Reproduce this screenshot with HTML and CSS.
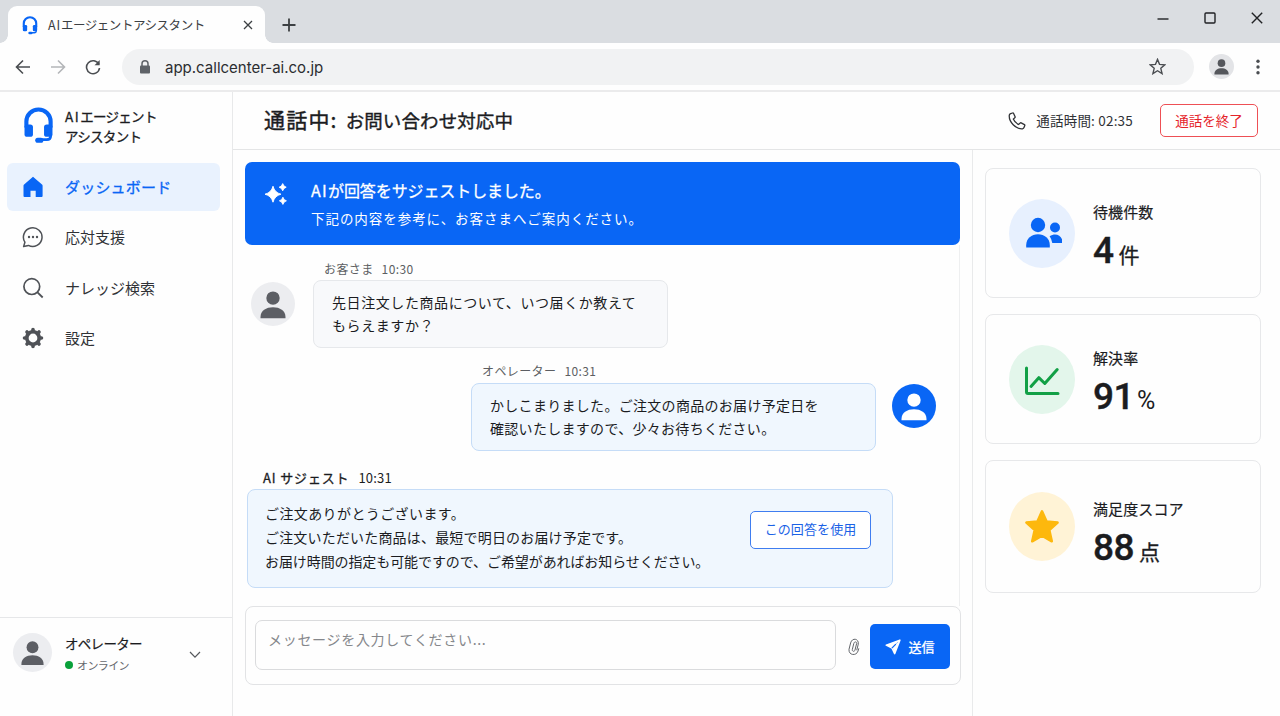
FILE: index.html
```html
<!DOCTYPE html>
<html lang="ja">
<head>
  <meta charset="UTF-8">
  <meta name="viewport" content="width=device-width, initial-scale=1">
  <title>AIエージェントアシスタント</title>
  <link rel="stylesheet" href="styles.css">
</head>
<body>
  <!-- shared icons -->
  <svg class="defs" width="0" height="0">
    <symbol id="headset" viewBox="0 0 28 36">
      <path d="M2.2 20v-5.800a11.800 11.800 0 0 1 23.600 0V20" fill="none" stroke="currentColor" stroke-width="4"/>
      <rect x="0.400" y="17" width="8.200" height="12" rx="2.600" fill="currentColor"/>
      <rect x="19.400" y="17" width="8.200" height="12" rx="2.600" fill="currentColor"/>
      <path d="M25.800 26v2.500q0 3.300-3.600 3.300H16" fill="none" stroke="currentColor" stroke-width="2.600"/>
      <rect x="10.800" y="29.800" width="8" height="5" rx="2.500" fill="currentColor"/>
    </symbol>
    <symbol id="person" viewBox="0 0 44 44">
      <circle cx="22" cy="16.100" r="6.700" fill="currentColor"/>
      <path d="M9.500 36.200v-1.200C9.500 28.500 15.200 25.200 22 25.200S34.500 28.500 34.500 35v1.200z" fill="currentColor"/>
    </symbol>
  </svg>

  <div class="tabstrip">
    <div class="tab">
      <svg class="tab-icon"><use href="#headset"/></svg>
      <span class="tab-title"><span class="latin">AI</span>エージェントアシスタント</span>
      <svg class="tab-close" viewBox="0 0 10 10"><path d="M1 1l8 8M9 1l-8 8"/></svg>
    </div>
    <svg class="tab-new" viewBox="0 0 14 14"><path d="M7 .5v13M.5 7h13"/></svg>
    <div class="window-buttons">
      <svg viewBox="0 0 12 12"><path d="M.5 7h11"/></svg>
      <svg viewBox="0 0 12 12"><rect x="1" y="1" width="10" height="10" rx="1"/></svg>
      <svg viewBox="0 0 12 12"><path d="M.8.8l10.400 10.400M11.200.8L.8 11.200"/></svg>
    </div>
  </div>

  <div class="toolbar">
    <svg class="tool back" viewBox="0 0 16 16"><path d="M15 8H1.500M8 1.500L1.500 8 8 14.500"/></svg>
    <svg class="tool forward" viewBox="0 0 16 16"><path d="M1 8h13.500M8 1.500L14.500 8 8 14.500"/></svg>
    <svg class="tool reload" viewBox="0 0 16 16"><path d="M13.800 5.200A6.500 6.500 0 1 0 14.500 9"/><path d="M14.700 1v5.200H9.500z" class="solid"/></svg>
    <div class="address">
      <svg class="lock" viewBox="0 0 12 14"><path d="M3 6V3.800a3 3 0 0 1 6 0V6" fill="none" stroke="#5f6368" stroke-width="1.500"/><rect x="1" y="5.500" width="10" height="8" rx="1" fill="#5f6368"/></svg>
      <span class="url">app.callcenter-ai.co.jp</span>
      <svg class="bookmark" viewBox="0 0 16 16"><path d="M8 1.300l1.900 4.700 5 .4-3.800 3.300 1.200 5L8 12l-4.300 2.700 1.200-5L1.100 6.400l5-.4z"/></svg>
    </div>
    <div class="profile"><svg><use href="#person"/></svg></div>
    <svg class="more" viewBox="0 0 4 16"><circle cx="2" cy="2.200" r="1.700"/><circle cx="2" cy="8" r="1.700"/><circle cx="2" cy="13.800" r="1.700"/></svg>
  </div>

  <div class="app">
    <div class="sidebar">
      <div class="brand">
        <svg class="brand-icon"><use href="#headset"/></svg>
        <div class="brand-name"><span class="latin">AI</span>エージェント<br>アシスタント</div>
      </div>
      <div class="nav">
        <div class="nav-item active">
          <svg viewBox="0 0 22 22"><path d="M11 .8L20 8.500q.6.500.6 1.300V20q0 1-1 1h-5.900v-6.300H8.500V21H2.500q-1 0-1-1V9.800q0-.8.6-1.300z" fill="currentColor"/></svg>
          <span>ダッシュボード</span>
        </div>
        <div class="nav-item">
          <svg viewBox="0 0 22 22"><path d="M2.900 16.200A9.300 9.300 0 1 1 6.400 19.400L1.600 20.600z" fill="none" stroke="currentColor" stroke-width="1.500" stroke-linejoin="round"/><circle cx="7" cy="11" r="1.200" fill="currentColor"/><circle cx="11" cy="11" r="1.200" fill="currentColor"/><circle cx="15" cy="11" r="1.200" fill="currentColor"/></svg>
          <span>応対支援</span>
        </div>
        <div class="nav-item">
          <svg viewBox="0 0 22 22"><circle cx="9.800" cy="9.600" r="7.900" fill="none" stroke="currentColor" stroke-width="1.700"/><path d="M15.500 15.300l5.200 5.200" stroke="currentColor" stroke-width="1.800"/></svg>
          <span>ナレッジ検索</span>
        </div>
        <div class="nav-item">
          <svg viewBox="0 0 22 22">
            <circle cx="11" cy="11" r="6.200" fill="none" stroke="currentColor" stroke-width="3.600"/>
            <g stroke="currentColor" stroke-width="3.600" stroke-linecap="round"><path d="M11 2.500v2M11 17.500v2M2.500 11h2M17.500 11h2M5 5l1.400 1.400M15.600 15.600L17 17M5 17l1.400-1.400M15.600 6.400L17 5"/></g>
          </svg>
          <span>設定</span>
        </div>
      </div>
      <div class="user">
        <div class="avatar user-avatar"><svg><use href="#person"/></svg></div>
        <div class="user-text">
          <div class="user-name">オペレーター</div>
          <div class="user-status"><i></i>オンライン</div>
        </div>
        <svg class="chevron" viewBox="0 0 12 8"><path d="M1 1l5 5.200L11 1"/></svg>
      </div>
    </div>

    <div class="main">
      <div class="header">
        <h1>通話中:<span>お問い合わせ対応中</span></h1>
        <svg class="phone" viewBox="0 0 18 18"><path d="M2.600 1.600L4.600 1q.7-.2 1 .5l1.500 3.300q.2.600-.3 1L5.300 7.100q1.300 3.300 5.200 5.400l1.700-1.500q.4-.4 1-.1l3.200 1.700q.6.400.4 1l-.8 2q-.4 1-1.500 1.200C8 17.400.6 10 1.300 3.200q.2-1.200 1.300-1.600z"/></svg>
        <span class="call-time">通話時間: 02:35</span>
        <button class="end-call">通話を終了</button>
      </div>

      <div class="content">
        <div class="chat">
          <div class="banner">
            <svg viewBox="0 0 24 24"><path d="M9 4.200q1.600 6.400 8 8-6.400 1.600-8 8-1.600-6.400-8-8 6.400-1.600 8-8zM18.700 1.600q.8 3 3.500 3.600-2.700.7-3.500 3.600-.8-2.900-3.500-3.600 2.700-.6 3.500-3.600zM18.900 15.200q.8 3 3.500 3.600-2.700.7-3.500 3.600-.8-2.900-3.500-3.600 2.700-.6 3.500-3.600z" fill="#fff" stroke="#fff" stroke-width=".9" stroke-linejoin="round"/></svg>
            <div>
              <div class="banner-title"><span class="latin">AI</span>が回答をサジェストしました。</div>
              <div class="banner-text">下記の内容を参考に、お客さまへご案内ください。</div>
            </div>
          </div>

          <div class="messages">
            <div class="message customer">
              <div class="avatar"><svg><use href="#person"/></svg></div>
              <div class="message-body">
                <div class="meta">お客さま<time>10:30</time></div>
                <div class="bubble">先日注文した商品について、いつ届くか教えて<br>もらえますか？</div>
              </div>
            </div>
            <div class="message operator">
              <div class="message-body">
                <div class="meta">オペレーター<time>10:31</time></div>
                <div class="bubble">かしこまりました。ご注文の商品のお届け予定日を<br>確認いたしますので、少々お待ちください。</div>
              </div>
              <div class="avatar"><svg><use href="#person"/></svg></div>
            </div>
            <div class="suggest">
              <div class="suggest-meta"><b>AI サジェスト</b><time>10:31</time></div>
              <div class="suggest-box">
                <div class="suggest-text">
                  <p class="wide">ご注文ありがとうございます。</p>
                  <p class="mid">ご注文いただいた商品は、最短で明日のお届け予定です。</p>
                  <p>お届け時間の指定も可能ですので、ご希望があればお知らせください。</p>
                </div>
                <button class="use-answer">この回答を使用</button>
              </div>
            </div>
          </div>

          <div class="composer">
            <div class="input">メッセージを入力してください...</div>
            <svg class="clip" viewBox="0 0 14 20"><path d="M10.400 6.500L8.600 13.500C8 15.600 5.200 15 5.700 12.700L7.300 6.200C8 3.300 11.300 4 10.500 7M12.900 11.500L12 14.500C10.300 20.300 1.300 19.400 2 12.600L3.800 5.500C5.500-.9 13.200.6 12.300 6.800L10.600 13.600"/></svg>
            <button class="send">
              <svg viewBox="0 0 18 18"><path d="M16.700 1.300L10.900 16.400 8 10.200 1.400 6.900z" fill="none" stroke="#fff" stroke-width="1.800" stroke-linejoin="round"/><path d="M16.500 1.500L8.500 9.800l2.500 6zM16 1.500L1.500 7 8 10z" fill="#fff"/><path d="M7.700 10.300L12.200 5.800" stroke="#0966f5" stroke-width="1.200"/></svg>
              送信
            </button>
          </div>
        </div>

        <div class="stats">
          <div class="card waiting">
            <div class="card-icon">
              <svg viewBox="0 0 40 40"><g fill="#0966f5"><circle cx="16" cy="12" r="7.200"/><path d="M4.200 34.500v-2.300C4.200 25.500 9.500 21.300 16 21.300s11.800 4.200 11.800 10.900v2.300z"/><circle cx="33" cy="14.500" r="5"/><path d="M27.600 23.300c7-4.300 13.200.3 13.200 6.700H30.300q-.6-3.800-2.700-6.700z"/></g></svg>
            </div>
            <div class="card-text">
              <div class="label">待機件数</div>
              <div class="value">4<span>件</span></div>
            </div>
          </div>
          <div class="card solved">
            <div class="card-icon">
              <svg viewBox="0 0 40 40"><path d="M4.500 9v24q0 1.500 1.500 1.500H36M9 27.500l7.800-8.800 6 5.800L35.200 10.500" fill="none" stroke="#12a046" stroke-width="3" stroke-linecap="round" stroke-linejoin="round"/></svg>
            </div>
            <div class="card-text">
              <div class="label">解決率</div>
              <div class="value">91<span class="percent">%</span></div>
            </div>
          </div>
          <div class="card score">
            <div class="card-icon">
              <svg viewBox="0 0 40 40"><path d="M20 4.300l4.600 10.200 11 1.100-8.300 7.500 2.500 11.200L20 28.700l-9.800 5.600 2.500-11.200-8.300-7.500 11-1.100z" fill="#fdb80d" stroke="#fdb80d" stroke-width="2.500" stroke-linejoin="round"/></svg>
            </div>
            <div class="card-text">
              <div class="label">満足度スコア</div>
              <div class="value">88<span>点</span></div>
            </div>
          </div>
        </div>
      </div>
    </div>
  </div>
</body>
</html>
```
FILE: styles.css
```css
* {
  box-sizing: border-box;
}
body {
  margin: 0;
  height: 716px;
  overflow: hidden;
  display: flex;
  flex-direction: column;
  background: #fefefe;
  color: #1b1c1f;
  font-family: "Noto Sans CJK JP", sans-serif;
  font-size: 14px;
}
svg {
  display: block;
  flex: none;
}
h1, p {
  margin: 0;
}
button {
  font-family: inherit;
  padding: 0;
  white-space: nowrap;
}
.defs {
  position: absolute;
}
.latin {
  letter-spacing: 1.300px;
}

/* browser window */
.tabstrip {
  height: 43px;
  flex: none;
  display: flex;
  align-items: center;
  background: #dadde1;
}
.tab {
  position: relative;
  align-self: flex-end;
  width: 257px;
  height: 37px;
  margin-left: 8px;
  padding: 0 12px 0 14px;
  display: flex;
  align-items: center;
  background: #fefefe;
  border-radius: 9px 9px 0 0;
}
.tab::before, .tab::after {
  content: "";
  position: absolute;
  bottom: 0;
  width: 8px;
  height: 8px;
}
.tab::before {
  left: -8px;
  background: radial-gradient(circle at 0 0, #dadde1 7.500px, #fefefe 8px);
}
.tab::after {
  right: -8px;
  background: radial-gradient(circle at 100% 0, #dadde1 7.500px, #fefefe 8px);
}
.tab-icon {
  width: 16px;
  height: 19px;
  margin-top: 2px;
  color: #0966f5;
}
.tab-title {
  flex: 1;
  margin-left: 10px;
  font-size: 12.500px;
  letter-spacing: -0.450px;
  color: #3c4043;
  white-space: nowrap;
}
.tab-title .latin {
  letter-spacing: 0.800px;
}
.tab-close {
  width: 10px;
  height: 10px;
}
.tab-close path, .tab-new path {
  stroke: #3c4043;
  stroke-width: 1.300;
}
.tab-new {
  width: 14px;
  height: 14px;
  margin: 6px 0 0 17px;
}
.tab-new path {
  stroke-width: 1.800;
}
.window-buttons {
  margin-left: auto;
  padding: 0 17px 7px 0;
  display: flex;
  gap: 35px;
}
.window-buttons svg {
  width: 12px;
  height: 12px;
  fill: none;
  stroke: #202124;
  stroke-width: 1.400;
}
.toolbar {
  height: 49px;
  flex: none;
  padding: 0 20px 0 15px;
  display: flex;
  align-items: center;
  border-bottom: 2px solid #ebebec;
}
.tool {
  width: 16px;
  height: 16px;
  margin-right: 19px;
  fill: none;
  stroke: #4a4d51;
  stroke-width: 1.600;
}
.forward {
  stroke: #b4b6b9;
}
.reload .solid {
  fill: #4a4d51;
  stroke: none;
}
.reload {
  margin-right: 21px;
}
.address {
  width: 1072px;
  height: 36px;
  padding: 0 28px 0 17px;
  display: flex;
  align-items: center;
  background: #f1f2f3;
  border-radius: 18px;
}
.lock {
  width: 12px;
  height: 14px;
}
.url {
  flex: 1;
  margin-left: 14px;
  padding-top: 2px;
  font-family: Inter, sans-serif;
  font-size: 15px;
  color: #2b2d30;
}
.bookmark {
  width: 17px;
  height: 17px;
  fill: none;
  stroke: #4a4d51;
  stroke-width: 1.300;
}
.profile {
  width: 25px;
  height: 25px;
  margin-left: 15px;
  border-radius: 50%;
  background: #e3e4e7;
  color: #55575c;
}
.profile svg {
  width: 25px;
  height: 25px;
}
.more {
  width: 4px;
  height: 16px;
  margin-left: auto;
  fill: #4a4d51;
}

/* sidebar */
.app {
  flex: 1;
  min-height: 0;
  display: flex;
}
.sidebar {
  width: 233px;
  flex: none;
  display: flex;
  flex-direction: column;
  border-right: 1px solid #e8e9ea;
}
.brand {
  display: flex;
  align-items: center;
  padding: 14px 0 0 24px;
}
.brand-icon {
  width: 29px;
  height: 37px;
  margin-top: -2px;
  color: #0966f5;
}
.brand-name {
  margin-left: 12px;
  font-size: 13.500px;
  line-height: 20px;
  letter-spacing: -0.7px;
  -webkit-text-stroke: 0.3px;
}
.brand-name .latin {
  letter-spacing: 1.500px;
}
.nav {
  padding: 17px 12px 0 7px;
}
.nav-item {
  height: 48px;
  margin-bottom: 2.500px;
  padding-left: 15px;
  display: flex;
  align-items: center;
  border-radius: 6px;
  font-size: 15px;
  color: #303236;
}
.nav-item span {
  padding-bottom: 2px;
}
.nav-item svg {
  width: 22px;
  height: 22px;
  margin: -1px 21px 0 0;
  color: #4f5257;
}
.nav-item.active, .nav-item.active svg {
  color: #0966f5;
}
.nav-item.active {
  background: #e9f2fe;
  letter-spacing: 0.200px;
  -webkit-text-stroke: 0.3px;
}
.user {
  height: 99px;
  margin-top: auto;
  padding: 15px 0 0 13px;
  display: flex;
  align-items: flex-start;
  border-top: 1px solid #e6e7e9;
}
.avatar {
  width: 44px;
  height: 44px;
  flex: none;
  border-radius: 50%;
  background: #ecedf0;
  color: #5c5e64;
}
.avatar svg {
  width: 100%;
  height: 100%;
}
.user-avatar {
  width: 39px;
  height: 39px;
}
.user-text {
  width: 137px;
  margin-left: 13px;
}
.user-name {
  margin-top: -1px;
  font-size: 13.500px;
  line-height: 22px;
  letter-spacing: -0.7px;
  -webkit-text-stroke: 0.2px;
}
.user-status {
  margin-top: 1px;
  display: flex;
  align-items: center;
  font-size: 11px;
  line-height: 20px;
  letter-spacing: -0.6px;
  color: #66686d;
}
.user-status i {
  width: 8px;
  height: 8px;
  margin-right: 4px;
  border-radius: 50%;
  background: #0aa13a;
}
.chevron {
  width: 12px;
  height: 8px;
  margin: 18px 0 0 -13px;
  fill: none;
  stroke: #55585c;
  stroke-width: 1.200;
}

/* header */
.main {
  flex: 1;
  display: flex;
  flex-direction: column;
}
.header {
  height: 58px;
  flex: none;
  padding: 0 22px 0 31px;
  display: flex;
  align-items: center;
  border-bottom: 1px solid #e4e5e6;
}
h1 {
  margin-right: auto;
  padding-bottom: 3px;
  font-size: 21px;
  font-weight: 400;
  letter-spacing: 1.200px;
  -webkit-text-stroke: 0.4px;
}
h1 span {
  margin-left: 8px;
  font-size: 18.500px;
  letter-spacing: 0.100px;
}
.phone {
  width: 18px;
  height: 18px;
  fill: none;
  stroke: #303236;
  stroke-width: 1.300;
}
.call-time {
  margin: 0 27px 0 10px;
  padding-bottom: 1px;
  font-size: 13.500px;
  letter-spacing: 0.200px;
  color: #303236;
}
.end-call {
  width: 98px;
  height: 33px;
  padding-bottom: 2px;
  border: 1px solid #ee5055;
  border-radius: 5px;
  background: #fff;
  color: #e5252b;
  font-size: 13.500px;
}

/* chat */
.content {
  flex: 1;
  display: flex;
}
.chat {
  width: 739px;
  padding: 12px 11px 0 12px;
}
.banner {
  width: 714.500px;
  height: 83px;
  padding: 15px 0 0 19px;
  display: flex;
  align-items: flex-start;
  border-radius: 7px;
  background: #0966f5;
  color: #fff;
}
.banner svg {
  width: 24px;
  height: 24px;
  margin: 5px 23px 0 0;
}
.banner-title {
  font-size: 16px;
  line-height: 27px;
  letter-spacing: -0.100px;
  -webkit-text-stroke: 0.3px;
}
.banner-text {
  font-size: 13.500px;
  line-height: 28px;
  letter-spacing: 0.950px;
}
.messages {
  width: 715px;
  height: 361px;
  padding-top: 14px;
  border-right: 1px solid #eeeff0;
}
.message {
  display: flex;
}
.message .avatar {
  margin-top: 23px;
}
.meta {
  font-size: 12px;
  line-height: 20px;
  letter-spacing: 0.4px;
  color: #5c5e62;
}
.meta time {
  margin-left: 8px;
}
.bubble {
  border: 1px solid #e6e8eb;
  border-radius: 8px;
  background: #f8f9fb;
  font-size: 14px;
  line-height: 23px;
  white-space: nowrap;
}
.customer {
  padding-left: 6px;
}
.customer .message-body {
  margin-left: 18px;
}
.customer .meta {
  padding-left: 11px;
}
.customer .bubble {
  width: 355px;
  height: 68px;
  margin-top: 1px;
  padding: 10px 18px;
  letter-spacing: 0.580px;
}
.operator {
  margin-top: 13px;
  padding-left: 226px;
}
.operator .meta {
  padding-left: 11px;
}
.operator .bubble {
  width: 405px;
  height: 68px;
  margin-top: 2px;
  padding: 10px 18px;
  border-color: #c5dcf7;
  background: #f0f7fe;
  letter-spacing: 0.300px;
}
.operator .avatar {
  margin-left: 16px;
  background: #0966f5;
  color: #fff;
}
.suggest {
  margin-top: 17px;
  padding-left: 2px;
}
.suggest-meta {
  padding-left: 16px;
  font-size: 13px;
  line-height: 20px;
}
.suggest-meta b {
  margin-right: 9px;
  font-weight: 400;
  letter-spacing: 0.850px;
  -webkit-text-stroke: 0.3px;
}
.suggest-meta time {
  letter-spacing: 0.200px;
}
.suggest-box {
  width: 646px;
  height: 99px;
  margin-top: 1px;
  padding: 11px 21px 0 17px;
  display: flex;
  justify-content: space-between;
  align-items: flex-start;
  border: 1px solid #c5dcf7;
  border-radius: 8px;
  background: #f0f7fe;
}
.suggest-text {
  font-size: 14px;
  line-height: 24px;
  letter-spacing: -0.090px;
  white-space: nowrap;
}
.suggest-text .wide {
  letter-spacing: 0.400px;
}
.suggest-text .mid {
  letter-spacing: 0.180px;
}
.use-answer {
  width: 121px;
  height: 38px;
  margin-top: 10px;
  padding-bottom: 3px;
  border: 1px solid #3f7df0;
  border-radius: 5px;
  background: #fff;
  color: #1b62e6;
  font-size: 13px;
  letter-spacing: 0.100px;
}
.composer {
  width: 716px;
  height: 79px;
  padding: 0 10px 0 9px;
  display: flex;
  align-items: center;
  border: 1px solid #e2e3e5;
  border-radius: 8px;
  background: #fefefe;
}
.input {
  width: 581px;
  height: 50px;
  margin-top: -1px;
  padding: 8px 12px;
  border: 1px solid #dadbdd;
  border-radius: 7px;
  font-size: 14px;
  letter-spacing: 0.700px;
  color: #85878b;
}
.clip {
  width: 13px;
  height: 18px;
  margin: 2px 10px 0 11px;
  fill: none;
  stroke: #606368;
  stroke-width: 1.100;
}
.send {
  width: 80px;
  height: 45px;
  margin-top: 2px;
  display: flex;
  align-items: center;
  justify-content: center;
  gap: 7px;
  border: none;
  border-radius: 5px;
  background: #0966f5;
  color: #fff;
  font-size: 13px;
  -webkit-text-stroke: 0.3px;
}
.send svg {
  width: 16px;
  height: 16px;
}

/* stats */
.stats {
  flex: 1;
  padding: 18px 19px 0 12px;
  border-left: 1px solid #e9eaeb;
}
.card {
  height: 130px;
  margin-bottom: 16px;
  padding-left: 23px;
  display: flex;
  align-items: center;
  border: 1px solid #e7e8ea;
  border-radius: 8px;
}
.card-icon {
  width: 66px;
  height: 69px;
  margin-right: 18px;
  display: flex;
  align-items: center;
  justify-content: center;
  border-radius: 50%;
}
.card-icon svg {
  width: 40px;
  height: 40px;
}
.card-text {
  padding-top: 11px;
}
.waiting .card-icon {
  background: #e7f0fe;
}
.solved .card-icon {
  background: #e3f6eb;
}
.score .card-icon {
  background: #fff3d6;
}
.score {
  height: 133px;
}
.score .card-text {
  padding-top: 19px;
}
.label {
  font-size: 15px;
  line-height: 22px;
  letter-spacing: 0.100px;
  -webkit-text-stroke: 0.2px;
}
.value {
  height: 52px;
  margin-top: 2px;
  font-family: Roboto, "Noto Sans CJK JP", sans-serif;
  font-size: 37px;
  font-weight: 500;
  line-height: 52px;
  letter-spacing: -0.500px;
  -webkit-text-stroke: 0.4px;
}
.value span {
  margin-left: 5px;
  font-size: 21px;
  font-weight: 400;
  -webkit-text-stroke: 0.3px;
}
.value .percent {
  margin-left: 3px;
  font-size: 25px;
  -webkit-text-stroke: 0;
}
```
